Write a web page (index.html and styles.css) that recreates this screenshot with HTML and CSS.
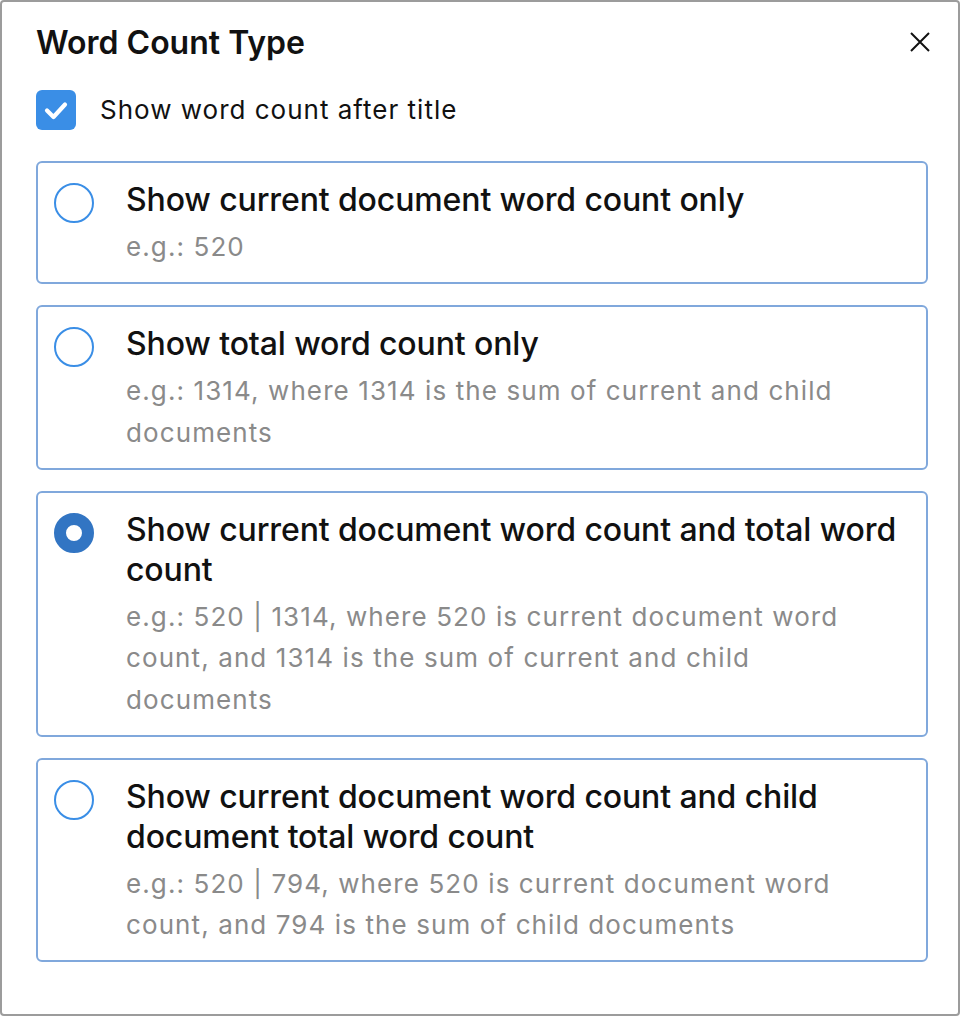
FILE: index.html
```html
<!DOCTYPE html>
<html>
<head>
<meta charset="utf-8">
<title>Word Count Type</title>
<link rel="stylesheet" href="styles.css">
</head>
<body>
<div class="dialog">
  <div class="header">
    <h1 class="title">Word Count Type</h1>
    <button class="close" aria-label="Close">
      <svg viewBox="0 0 20 20" width="20" height="20"><path d="M1 1 L19 19 M19 1 L1 19" stroke="#111" stroke-width="2" fill="none"/></svg>
    </button>
  </div>
  <label class="check-row">
    <span class="checkbox">
      <svg viewBox="0 0 40 40" width="40" height="40"><path d="M11 20.5 L17.5 27 L29 14.5" stroke="#fff" stroke-width="4.2" stroke-linecap="round" stroke-linejoin="round" fill="none"/></svg>
    </span>
    <span class="check-label">Show word count after title</span>
  </label>
  <div class="options">
    <div class="option">
      <span class="radio"></span>
      <div class="option-body">
        <div class="option-title">Show current document word count only</div>
        <div class="option-desc">e.g.: 520</div>
      </div>
    </div>
    <div class="option">
      <span class="radio"></span>
      <div class="option-body">
        <div class="option-title">Show total word count only</div>
        <div class="option-desc">e.g.: 1314, where 1314 is the sum of current and child documents</div>
      </div>
    </div>
    <div class="option">
      <span class="radio checked"></span>
      <div class="option-body">
        <div class="option-title">Show current document word count and total word count</div>
        <div class="option-desc">e.g.: 520 | 1314, where 520 is current document word count, and 1314 is the sum of current and child documents</div>
      </div>
    </div>
    <div class="option">
      <span class="radio"></span>
      <div class="option-body">
        <div class="option-title">Show current document word count and child document total word count</div>
        <div class="option-desc">e.g.: 520 | 794, where 520 is current document word count, and 794 is the sum of child documents</div>
      </div>
    </div>
  </div>
</div>
</body>
</html>
```
FILE: styles.css
```css
html, body {
  margin: 0;
  padding: 0;
  background: #fff;
}
.dialog {
  box-sizing: border-box;
  width: 960px;
  height: 1016px;
  border: 2px solid #9c9c9c;
  border-radius: 4px;
  padding: 20.5px 30px 0 34px;
  font-family: "Inter", "Noto Sans", sans-serif;
  color: #111;
}
.header {
  display: flex;
  align-items: center;
  justify-content: space-between;
  height: 40px;
}
.title {
  margin: 0;
  font-size: 32px;
  line-height: 40px;
  font-weight: 600;
  letter-spacing: 0;
}
.close {
  border: 0;
  background: none;
  padding: 0;
  width: 20px;
  height: 20px;
  margin-right: -2px;
  margin-top: -1px;
  display: block;
}
.close svg { display: block; }
.check-row {
  display: flex;
  align-items: center;
  gap: 24px;
  margin-top: 27.5px;
  height: 40px;
}
.checkbox {
  width: 40px;
  height: 40px;
  border-radius: 6px;
  background: #3a8ee6;
  display: block;
  flex: none;
}
.checkbox svg { display: block; }
.check-label {
  font-size: 26px;
  line-height: 40px;
  letter-spacing: 1px;
  color: #111;
}
.options {
  display: flex;
  flex-direction: column;
  gap: 21px;
  margin-top: 31px;
}
.option {
  display: flex;
  align-items: flex-start;
  gap: 32px;
  border: 2px solid #80a8dc;
  border-radius: 6px;
  padding: 17px 26px 14.5px 16px;
}
.radio {
  flex: none;
  box-sizing: border-box;
  width: 40px;
  height: 40px;
  border-radius: 50%;
  border: 2px solid #3a8ee6;
  margin-top: 3px;
  background: #fff;
}
.radio.checked {
  border: 12px solid #3275c3;
  background: #fff;
}
.option-body {
  flex: 1;
  min-width: 0;
}
.option-title {
  font-size: 32px;
  line-height: 40px;
  font-weight: 500;
  letter-spacing: -0.12px;
  color: #111;
}
.option-desc {
  margin-top: 6px;
  font-size: 26px;
  line-height: 41.5px;
  letter-spacing: 1.1px;
  color: #8a8a8a;
}
```
